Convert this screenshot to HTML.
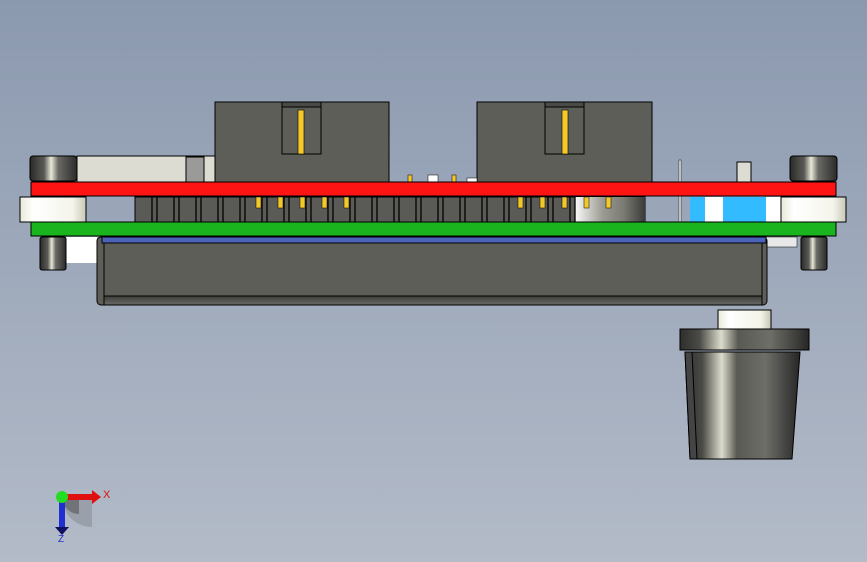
<!DOCTYPE html>
<html><head><meta charset="utf-8"><style>
html,body{margin:0;padding:0}
body{width:867px;height:562px;overflow:hidden;background:linear-gradient(#8b99af,#b3bbc8)}
svg{display:block}
</style></head><body>
<svg width="867" height="562" viewBox="0 0 867 562" xmlns="http://www.w3.org/2000/svg">
<defs>
<linearGradient id="cyl" x1="0" x2="1">
<stop offset="0" stop-color="#2a2a2a"/><stop offset=".3" stop-color="#5a5a55"/><stop offset=".45" stop-color="#e8e8d8"/><stop offset=".6" stop-color="#6a6a65"/><stop offset="1" stop-color="#2a2a2a"/></linearGradient>
<linearGradient id="wcyl" x1="0" x2="1">
<stop offset="0" stop-color="#e8e8d8"/><stop offset=".2" stop-color="#ffffff"/><stop offset=".8" stop-color="#f4f4ea"/><stop offset="1" stop-color="#c8c8b8"/></linearGradient>
<linearGradient id="knob" x1="0" x2="1">
<stop offset="0" stop-color="#2e2e2c"/><stop offset=".15" stop-color="#4a4a46"/><stop offset=".32" stop-color="#dcdccc"/><stop offset=".45" stop-color="#5a5a54"/><stop offset=".7" stop-color="#6e6e68"/><stop offset="1" stop-color="#262626"/></linearGradient>
<linearGradient id="metal" x1="0" x2="1">
<stop offset="0" stop-color="#fafafa"/><stop offset=".4" stop-color="#9a9a92"/><stop offset=".7" stop-color="#7a7a72"/><stop offset="1" stop-color="#3a3a3a"/></linearGradient>
<linearGradient id="btm" x1="0" y1="0" x2="0" y2="1"><stop offset="0" stop-color="#3c3c3a"/><stop offset="1" stop-color="#6a6a66"/></linearGradient>
</defs>
<g stroke="#000" stroke-width="1">
<rect x="77" y="156" width="138" height="26" fill="#dcdcd2"/>
<rect x="186" y="157" width="18" height="25" fill="#9a9a98"/>
<rect x="215" y="102" width="174" height="80" fill="#5e5e58"/>
<rect x="282" y="102" width="39" height="52" fill="#5e5e58"/>
<rect x="282" y="102" width="39" height="5" fill="#4a4a46"/>
<rect x="298" y="110" width="6" height="44" fill="#f2c82a" stroke-width=".6"/>
<rect x="477" y="102" width="175" height="80" fill="#5e5e58"/>
<rect x="545" y="102" width="39" height="52" fill="#5e5e58"/>
<rect x="545" y="102" width="39" height="5" fill="#4a4a46"/>
<rect x="562" y="110" width="6" height="44" fill="#f2c82a" stroke-width=".6"/>
<rect x="408" y="175" width="4" height="7" fill="#f2c82a" stroke-width=".5"/>
<rect x="428" y="175" width="10" height="7" fill="#fff" stroke-width=".5"/>
<rect x="452" y="175" width="4" height="7" fill="#f2c82a" stroke-width=".5"/>
<rect x="467" y="178" width="10" height="4" fill="#fff" stroke-width=".5"/>
<rect x="679" y="160" width="2" height="62" fill="#fff" stroke-width=".5"/>
<rect x="737" y="162" width="14" height="20" fill="#dcdcd2"/>
<rect x="30" y="156" width="47" height="25" rx="3" fill="url(#cyl)"/>
<rect x="790" y="156" width="47" height="25" rx="3" fill="url(#cyl)"/>
<rect x="135" y="197" width="510" height="25" fill="#5a5a56"/>
<rect x="575" y="197" width="70" height="25" fill="url(#metal)" stroke="none"/>
<rect x="690" y="197" width="15" height="25" fill="#33bbff" stroke="none"/>
<rect x="705" y="197" width="18" height="25" fill="#fff" stroke="none"/>
<rect x="723" y="197" width="43" height="25" fill="#33bbff" stroke="none"/>
<rect x="766" y="197" width="20" height="25" fill="#fff" stroke="none"/>
</g>
<g stroke="#000" stroke-width="1.3">
<path d="M152 197v25M157 197v25M174 197v25M179 197v25M196 197v25M201 197v25M218 197v25M223 197v25M240 197v25M245 197v25M262 197v25M267 197v25M284 197v25M289 197v25M306 197v25M311 197v25M328 197v25M333 197v25M350 197v25M355 197v25M372 197v25M377 197v25M394 197v25M399 197v25M416 197v25M421 197v25M438 197v25M443 197v25M460 197v25M465 197v25M482 197v25M487 197v25M504 197v25M509 197v25M526 197v25M531 197v25M548 197v25M553 197v25M570 197v25M575 197v25"/>
</g>
<g fill="#f2c82a" stroke="#000" stroke-width=".5">
<rect x="256" y="197" width="5" height="11"/><rect x="278" y="197" width="5" height="11"/><rect x="300" y="197" width="5" height="11"/><rect x="322" y="197" width="5" height="11"/><rect x="344" y="197" width="5" height="11"/>
<rect x="518" y="197" width="5" height="11"/><rect x="540" y="197" width="5" height="11"/><rect x="562" y="197" width="5" height="11"/><rect x="584" y="197" width="5" height="11"/><rect x="606" y="197" width="5" height="11"/>
</g>
<g stroke="#000" stroke-width="1">
<rect x="31" y="182" width="805" height="14" fill="#ff1414"/>
<rect x="20" y="197" width="66" height="25" fill="url(#wcyl)"/>
<rect x="781" y="197" width="65" height="25" fill="url(#wcyl)"/>
<rect x="31" y="222" width="805" height="14" fill="#1ab41e"/>
<rect x="66" y="237" width="31" height="26" fill="#fff" stroke="none"/>
<rect x="40" y="237" width="26" height="33" rx="2" fill="url(#cyl)"/>
<rect x="801" y="237" width="26" height="33" rx="2" fill="url(#cyl)"/>
<rect x="765" y="237" width="32" height="10" fill="#e8e8e8" stroke-width=".5"/>
<rect x="97" y="237" width="670" height="68" rx="4" fill="#5e5e58"/>
<rect x="102" y="237" width="664" height="6" fill="#4a62b8"/>
<rect x="104" y="243" width="658" height="53" fill="#5e5e58"/>
<rect x="104" y="296" width="658" height="9" fill="url(#btm)"/>
<rect x="718" y="310" width="53" height="19" fill="url(#wcyl)"/>
<rect x="680" y="329" width="129" height="21" fill="url(#knob)"/>
<path d="M685 352H800L792 459H690Z" fill="url(#knob)"/>
<path d="M685 352L690 459H697L692 352Z" fill="#444"/>
</g>
<path d="M62 497A30 30 0 0 0 92 527V497Z" fill="#8a8f98" opacity=".6"/>
<path d="M62 497A17 17 0 0 0 79 514V497Z" fill="#555" opacity=".6"/>
<rect x="62" y="494" width="30" height="6" fill="#e01010"/>
<path d="M92 490L101 497L92 504Z" fill="#e01010"/>
<rect x="59" y="497" width="6" height="30" fill="#2030d0"/>
<path d="M55 527H69L62 535Z" fill="#101060"/>
<circle cx="62" cy="497" r="6" fill="#22dd22"/>
<text x="103" y="498" font-family="Liberation Sans,sans-serif" font-size="11" fill="#e01010">X</text>
<text x="58" y="542" font-family="Liberation Sans,sans-serif" font-size="10" fill="#2030d0">Z</text>
</svg>
</body></html>
